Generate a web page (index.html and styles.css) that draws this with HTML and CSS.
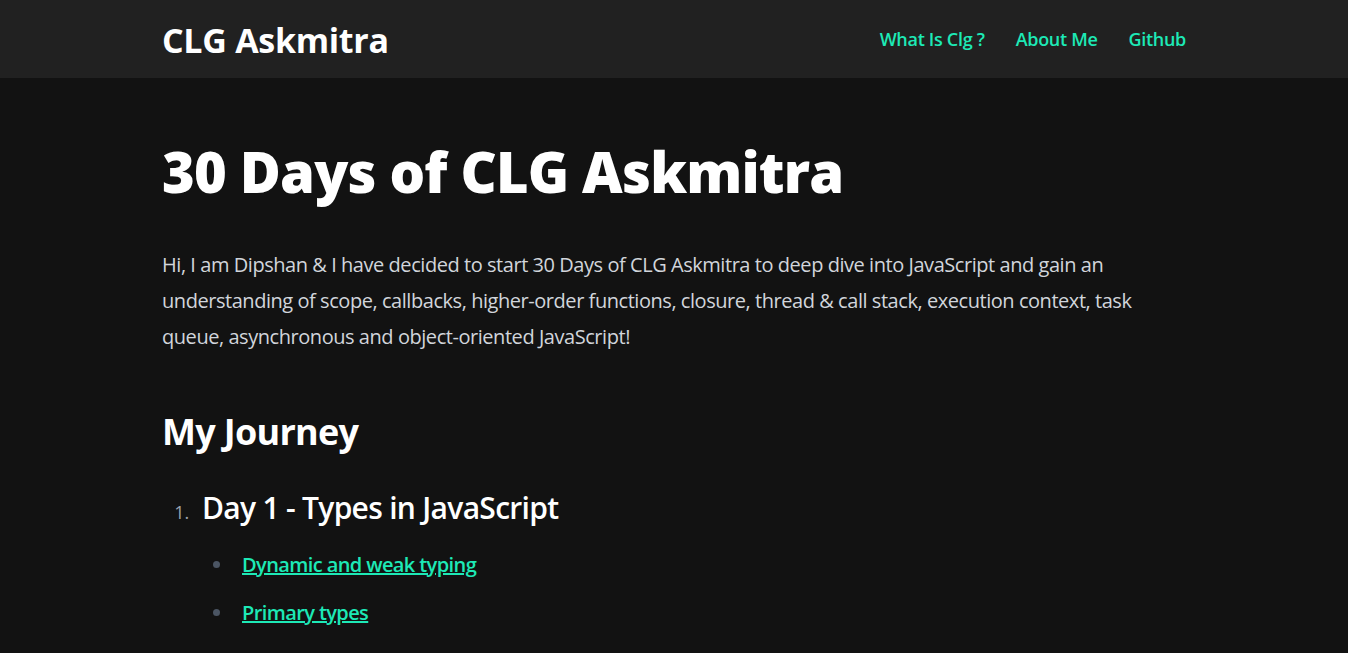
FILE: index.html
```html
<!DOCTYPE html>
<html lang="en">
<head>
<meta charset="utf-8">
<title>30 Days of CLG Askmitra</title>
<link rel="stylesheet" href="styles.css">
</head>
<body>
<header class="site-header">
  <div class="container header-inner">
    <a class="logo" href="#">CLG Askmitra</a>
    <nav class="nav">
      <a href="#">What Is Clg ?</a>
      <a href="#">About Me</a>
      <a href="#">Github</a>
    </nav>
  </div>
</header>
<main class="container prose">
  <h1>30 Days of CLG Askmitra</h1>
  <p>Hi, I am Dipshan &amp; I have decided to start 30 Days of CLG Askmitra to deep dive into JavaScript and gain an understanding of scope, callbacks, higher-order functions, closure, thread &amp; call stack, execution context, task queue, asynchronous and object-oriented JavaScript!</p>
  <h2>My Journey</h2>
  <ol class="days">
    <li>
      <h3>Day 1 - Types in JavaScript</h3>
      <ul class="topics">
        <li><a href="#">Dynamic and weak typing</a></li>
        <li><a href="#">Primary types</a></li>
      </ul>
    </li>
  </ol>
</main>
</body>
</html>
```
FILE: styles.css
```css
* { box-sizing: border-box; }
html, body { margin: 0; padding: 0; }
body {
  background: #121212;
  color: #d1d5db;
  font-family: "Open Sans", "Noto Sans", sans-serif;
}
.container {
  width: 1024px;
  margin: 0 auto;
}
.site-header {
  background: #212121;
  height: 78px;
}
.header-inner {
  height: 100%;
  display: flex;
  align-items: center;
  justify-content: space-between;
}
.logo {
  color: #fff;
  text-decoration: none;
  font-weight: 700;
  font-size: 34px;
  letter-spacing: -0.3px;
  margin-top: 1px;
}
.nav {
  display: flex;
  gap: 31px;
}
.nav a {
  color: #1de9b6;
  text-decoration: none;
  font-weight: 600;
  font-size: 18px;
  letter-spacing: -0.3px;
  margin-top: -1px;
}
.prose {
  padding-top: 65px;
  font-size: 20px;
  line-height: 36px;
}
.prose h1 {
  margin: 0 0 48px;
  font-size: 56px;
  line-height: 1;
  font-weight: 800;
  color: #fff;
  letter-spacing: -0.8px;
}
.prose p {
  margin: 0;
  letter-spacing: -0.45px;
}
.prose h2 {
  margin: 57px 0 32px;
  font-size: 36px;
  line-height: 40px;
  font-weight: 700;
  color: #fff;
  letter-spacing: -0.7px;
}
.days {
  margin: 0;
  padding-left: 32px;
}
.days > li {
  padding-left: 8px;
}
.days > li::marker {
  color: #9ca3af;
  font-size: 18px;
}
.days h3 {
  margin: 36px 0 19px;
  font-size: 30px;
  line-height: 40px;
  font-weight: 600;
  color: #fff;
  letter-spacing: -0.7px;
}
.topics {
  margin: 0;
  padding-left: 32px;
  list-style: disc;
}
.topics li {
  padding-left: 8px;
  margin: 0 0 12px;
}
.topics li::marker {
  color: #4b5563;
}
.topics a {
  color: #1de9b6;
  font-weight: 600;
  letter-spacing: -0.6px;
}
```
